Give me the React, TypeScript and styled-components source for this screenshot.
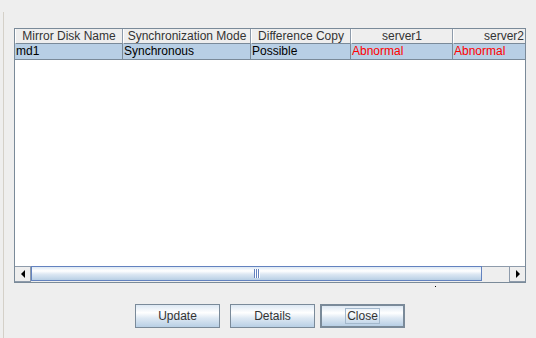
import styled, { createGlobalStyle } from "styled-components";

const GlobalStyle = createGlobalStyle`
  html, body {
    margin: 0;
    padding: 0;
    background: #eeeeee;
  }
  body {
    font-family: "Liberation Sans", Arial, sans-serif;
    font-size: 12px;
  }
`;

const columns = [
  { title: "Mirror Disk Name", width: 108 },
  { title: "Synchronization Mode", width: 128 },
  { title: "Difference Copy", width: 100 },
  { title: "server1", width: 102 },
  { title: "server2", width: 102 },
];

const rows = [
  [
    { text: "md1" },
    { text: "Synchronous" },
    { text: "Possible" },
    { text: "Abnormal", alert: true },
    { text: "Abnormal", alert: true },
  ],
];

const Window = styled.div`
  width: 536px;
  height: 338px;
  background: #eeeeee;
  overflow: hidden;
  display: flex;
  flex-direction: column;
`;

const Panel = styled.div`
  flex: 1;
  margin: 12px 0 0 3px;
  border-left: 1px solid #d4d0c8;
  padding: 16px 10px 0 10px;
  display: flex;
  flex-direction: column;
  position: relative;
`;

const ScrollPane = styled.div`
  width: 510px;
  height: 253px;
  border: 1px solid #7a8a99;
  background: #ffffff;
  display: flex;
  flex-direction: column;
`;

const Viewport = styled.div`
  flex: 1;
  overflow: hidden;
`;

const TableRow = styled.div<{ $header?: boolean; $selected?: boolean }>`
  display: flex;
  width: 540px;
  height: ${(p) => (p.$header ? 15 : 16)}px;
  background: ${(p) =>
    p.$header ? "#eeeeee" : p.$selected ? "#b8cfe5" : "#ffffff"};
`;

const HeaderCell = styled.div<{ $w: number }>`
  box-sizing: border-box;
  width: ${(p) => p.$w}px;
  flex: none;
  border-right: 1px solid #8e9bab;
  border-bottom: 1px solid #7a8a99;
  border-left: 1px solid #ffffff;
  color: #333333;
  text-align: center;
  line-height: 14px;
  white-space: nowrap;
  overflow: hidden;
`;

const Cell = styled.div<{ $w: number; $alert?: boolean }>`
  box-sizing: border-box;
  width: ${(p) => p.$w}px;
  flex: none;
  border-right: 1px solid #7a8a99;
  border-bottom: 1px solid #7a8a99;
  padding-left: 1px;
  color: ${(p) => (p.$alert ? "#ff0000" : "#000000")};
  line-height: 15px;
  white-space: nowrap;
  overflow: hidden;
`;

const ScrollBar = styled.div`
  height: 16px;
  display: flex;
  background: #eeeeee;
  flex: none;
`;

const ArrowButton = styled.div<{ $side: "left" | "right" }>`
  box-sizing: border-box;
  width: 16px;
  height: 16px;
  flex: none;
  background: #eeeeee;
  border: 1px solid #8e9bab;
  ${(p) => (p.$side === "left" ? "border-left: none;" : "border-right: none;")}
  display: flex;
  align-items: center;
  justify-content: center;
`;

const Track = styled.div`
  flex: 1;
  display: flex;
  border-top: 1px solid #8e9bab;
  border-bottom: 1px solid #eeeeee;
  background: #eeeeee;
`;

const Thumb = styled.div<{ $w: number }>`
  box-sizing: border-box;
  width: ${(p) => p.$w}px;
  height: 15px;
  margin-top: -1px;
  border: 1px solid #6382bf;
  border-top-color: #6382bf;
  background: linear-gradient(
    to bottom,
    #dde8f3 0%,
    #ffffff 30%,
    #dde8f3 55%,
    #b8cfe5 100%
  );
  display: flex;
  align-items: center;
  justify-content: center;
`;

const ButtonRow = styled.div`
  display: flex;
  justify-content: center;
  gap: 5px;
  margin-top: 21px;
`;

const Button = styled.button<{ $focused?: boolean; $spaceAfter?: number }>`
  box-sizing: border-box;
  width: 85px;
  height: 24px;
  margin: 0 ${(p) => p.$spaceAfter ?? 0}px 0 0;
  padding: 0;
  font-family: "Liberation Sans", Arial, sans-serif;
  font-size: 12px;
  color: #333333;
  border: ${(p) => (p.$focused ? "2px solid #7a8a99" : "1px solid #7a8a99")};
  background: linear-gradient(
    to bottom,
    #dde8f3 0%,
    #ffffff 35%,
    #dde8f3 60%,
    #b8cfe5 100%
  );
  display: flex;
  align-items: center;
  justify-content: center;
`;

const FocusLabel = styled.span`
  border: 1px solid #a3b8cc;
  padding: 0 1px;
  line-height: 14px;
`;

const Dot = styled.span`
  position: absolute;
  left: 431px;
  top: 274px;
  width: 1px;
  height: 1px;
  background: #000000;
`;

const Triangle = ({ dir }: { dir: "left" | "right" }) => (
  <svg width="4" height="8" viewBox="0 0 4 8">
    {dir === "left" ? (
      <polygon points="4,0 4,8 0,4" fill="#000" />
    ) : (
      <polygon points="0,0 0,8 4,4" fill="#000" />
    )}
  </svg>
);

const Grip = () => (
  <svg width="6" height="9" viewBox="0 0 6 9">
    {[0, 2, 4].map((x) => (
      <g key={x}>
        <rect x={x} y="0" width="1" height="9" fill="#6382bf" />
        <rect x={x + 1} y="0" width="1" height="9" fill="#ffffff" />
      </g>
    ))}
  </svg>
);

export default function App() {
  return (
    <Window>
      <GlobalStyle />
      <Panel>
        <ScrollPane>
          <Viewport>
            <TableRow $header>
              {columns.map((c) => (
                <HeaderCell key={c.title} $w={c.width}>
                  {c.title}
                </HeaderCell>
              ))}
            </TableRow>
            {rows.map((r, i) => (
              <TableRow key={i} $selected>
                {r.map((cell, j) => (
                  <Cell key={j} $w={columns[j].width} $alert={cell.alert}>
                    {cell.text}
                  </Cell>
                ))}
              </TableRow>
            ))}
          </Viewport>
          <ScrollBar>
            <ArrowButton $side="left">
              <Triangle dir="left" />
            </ArrowButton>
            <Track>
              <Thumb $w={451}>
                <Grip />
              </Thumb>
            </Track>
            <ArrowButton $side="right">
              <Triangle dir="right" />
            </ArrowButton>
          </ScrollBar>
        </ScrollPane>
        <ButtonRow>
          <Button $spaceAfter={5}>Update</Button>
          <Button>Details</Button>
          <Button $focused>
            <FocusLabel>Close</FocusLabel>
          </Button>
        </ButtonRow>
        <Dot />
      </Panel>
    </Window>
  );
}
